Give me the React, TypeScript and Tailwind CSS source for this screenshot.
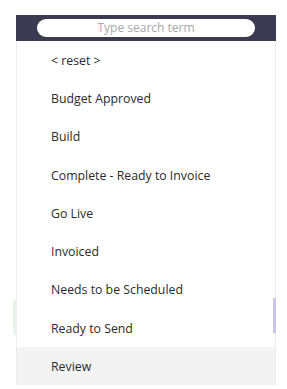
import React from 'react';

const options = [
  '< reset >',
  'Budget Approved',
  'Build',
  'Complete - Ready to Invoice',
  'Go Live',
  'Invoiced',
  'Needs to be Scheduled',
  'Ready to Send',
  'Review',
];

export default function App() {
  return (
    <div className="h-[389px] w-[287px] overflow-hidden bg-white pt-[15px] font-['Open_Sans',sans-serif]">
      <div className="relative ml-[16px] w-[260px]">
        {/* faint green thing behind the panel */}
        <div className="absolute left-[-3px] top-[285px] h-[35px] w-[3px] bg-[#e6f3e8]" />

        {/* Search header */}
        <div className="flex h-[26px] items-center bg-[#3a3a52] px-[21px]">
          <input
            className="h-[18px] w-full rounded-full bg-white text-center text-[12px] text-[#999] outline-none placeholder:text-[#a8a8a8]"
            placeholder="Type search term"
          />
        </div>

        {/* Options list */}
        <div className="relative border-x border-[#ececec]">
          {options.map((opt) => (
            <div
              key={opt}
              className={`flex h-[38.25px] items-center pl-[34px] pt-[2px] text-[12.3px] text-[#2b2b2b] ${
                opt === 'Review' ? 'bg-[#f3f3f3]' : ''
              }`}
            >
              {opt}
            </div>
          ))}
          {/* scrollbar thumb */}
          <div className="absolute right-[-1px] top-[257px] h-[35px] w-[3px] bg-[#c9c5e8]" />
        </div>
      </div>
    </div>
  );
}
